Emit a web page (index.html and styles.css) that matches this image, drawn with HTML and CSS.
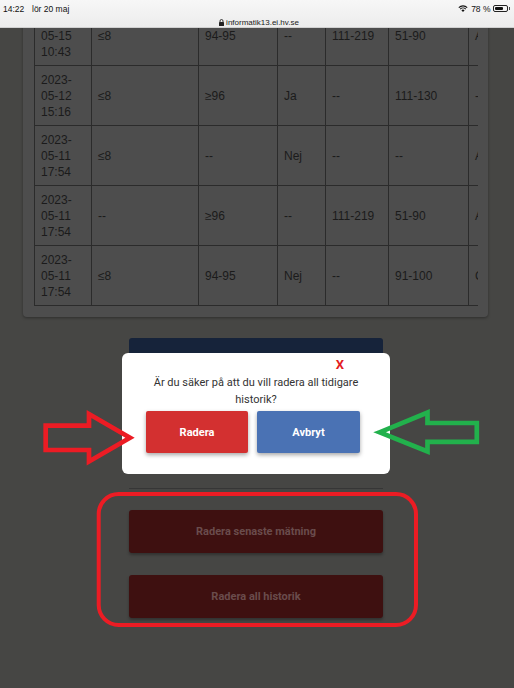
FILE: index.html
```html
<!DOCTYPE html>
<html lang="sv">
<head>
<meta charset="utf-8">
<title>Historik</title>
<link rel="stylesheet" href="styles.css">
</head>
<body>
<header class="statusbar">
  <div class="sb-row">
    <span class="sb-time">14:22</span>
    <span class="sb-date">lör 20 maj</span>
    <span class="sb-right">
      <svg class="sb-wifi" width="10" height="7" viewBox="0 0 10 7"><path d="M5 7 L3.4 5.3 A2.3 2.3 0 0 1 6.6 5.3 Z" fill="#111"/><path d="M2.2 4.1 A4 4 0 0 1 7.8 4.1" fill="none" stroke="#111" stroke-width="1.1"/><path d="M0.8 2.6 A6 6 0 0 1 9.2 2.6" fill="none" stroke="#111" stroke-width="1.1"/></svg>
      <span class="sb-pct">78 %</span>
      <span class="battery"><span class="battery-fill"></span></span><span class="battery-nub"></span>
    </span>
  </div>
  <div class="sb-url"><svg class="sb-lock" width="5" height="7" viewBox="0 0 5 7"><path d="M1 3 V2 A1.5 1.5 0 0 1 4 2 V3" fill="none" stroke="#222" stroke-width="0.9"/><rect x="0" y="3" width="5" height="4" rx="0.6" fill="#222"/></svg>informatik13.ei.hv.se</div>
</header>

<main class="page">
  <section class="card">
    <div class="table-wrap">
      <table class="history">
        <colgroup>
          <col class="c1"><col class="c2"><col class="c3"><col class="c4"><col class="c5"><col class="c6"><col class="c7">
        </colgroup>
        <tbody>
          <tr><td>2023-<br>05-15<br>10:43</td><td>≤8</td><td>94-95</td><td>--</td><td>111-219</td><td>51-90</td><td>Av</td></tr>
          <tr><td>2023-<br>05-12<br>15:16</td><td>≤8</td><td>≥96</td><td>Ja</td><td>--</td><td>111-130</td><td>-</td></tr>
          <tr><td>2023-<br>05-11<br>17:54</td><td>≤8</td><td>--</td><td>Nej</td><td>--</td><td>--</td><td>Av</td></tr>
          <tr><td>2023-<br>05-11<br>17:54</td><td>--</td><td>≥96</td><td>--</td><td>111-219</td><td>51-90</td><td>Av</td></tr>
          <tr><td>2023-<br>05-11<br>17:54</td><td>≤8</td><td>94-95</td><td>Nej</td><td>--</td><td>91-100</td><td>Ca</td></tr>
        </tbody>
      </table>
    </div>
  </section>

  <div class="actions">
    <button class="btn btn-navy" type="button"></button>
    <hr class="divider">
    <button class="btn btn-danger" type="button">Radera senaste mätning</button>
    <button class="btn btn-danger" type="button">Radera all historik</button>
  </div>
</main>

<div class="modal" role="dialog">
  <div class="modal-close"><span>X</span></div>
  <p class="modal-text">Är du säker på att du vill radera all tidigare<br>historik?</p>
  <div class="modal-actions">
    <button class="mbtn mbtn-red" type="button">Radera</button>
    <button class="mbtn mbtn-blue" type="button">Avbryt</button>
  </div>
</div>

<svg class="annotations" width="514" height="688" viewBox="0 0 514 688">
  <polygon points="45.7,425.7 89,425.7 89,414 130,437.7 89,461.5 89,450 45.7,450" fill="none" stroke="#ec1c24" stroke-width="4.7" stroke-linejoin="miter"/>
  <polygon points="379.5,432.3 427.5,412.5 427.5,423 476.8,423 476.8,441.8 427.5,441.8 427.5,451.5" fill="none" stroke="#22b14c" stroke-width="4.7" stroke-linejoin="miter"/>
  <rect x="98.7" y="494" width="317.3" height="131" rx="20" ry="20" fill="none" stroke="#ec1c24" stroke-width="4"/>
</svg>
</body>
</html>
```

FILE: styles.css
```css
html, body {
  margin: 0;
  padding: 0;
}
body {
  width: 514px;
  height: 688px;
  overflow: hidden;
  position: relative;
  background: #464644;
  font-family: "Liberation Sans", Arial, sans-serif;
}

/* status bar */
.statusbar {
  position: relative;
  z-index: 3;
  height: 28px;
  box-sizing: border-box;
  background: linear-gradient(#f7f7f7, #ececec);
  border-bottom: 1px solid #d0d0d0;
  color: #111;
}
.sb-row {
  display: flex;
  align-items: center;
  height: 17px;
  padding: 0 4px 0 3px;
  font-size: 8.5px;
}
.sb-time { width: 29px; }
.sb-date { }
.sb-right {
  margin-left: auto;
  display: flex;
  align-items: center;
  gap: 2px;
}
.sb-wifi { display: block; }
.sb-pct { margin-left: 1px; }
.battery {
  width: 14px;
  height: 6px;
  border: 1px solid #222;
  border-radius: 2px;
  padding: 1px;
  box-sizing: border-box;
  display: flex;
  width: 15px;
  height: 7px;
}
.battery-fill {
  width: 78%;
  background: #111;
  border-radius: 1px;
}
.battery-nub {
  width: 1.5px;
  height: 3px;
  background: #444;
  margin-left: -1px;
}
.sb-url {
  display: flex;
  justify-content: center;
  align-items: center;
  gap: 2px;
  font-size: 8px;
  color: #222;
  height: 10px;
  padding-left: 4px;
}
.sb-lock { display: block; }

/* page */
.page {
  margin-top: -34px;
}
.card {
  margin-left: 23px;
  width: 465px;
  box-sizing: border-box;
  padding: 11px 10px 11px 11px;
  background: #4d4d4d;
  border-radius: 4px;
  box-shadow: 0 1px 3px rgba(0, 0, 0, 0.35);
}
.table-wrap {
  width: 444px;
  overflow: hidden;
}
.history {
  border-collapse: collapse;
  table-layout: fixed;
  width: 494px;
  color: #1b1b1b;
  font-size: 12px;
  line-height: 16px;
}
.c1 { width: 57px; }
.c2 { width: 107px; }
.c3 { width: 79px; }
.c4 { width: 48px; }
.c5 { width: 63px; }
.c6 { width: 80px; }
.c7 { width: 60px; }
.history td {
  border: 1px solid #2b2b2b;
  padding: 5.5px 6px;
  vertical-align: middle;
  white-space: nowrap;
  overflow: hidden;
}

.actions {
  margin-left: 129px;
  width: 254px;
  display: flex;
  flex-direction: column;
}
.btn {
  border: none;
  height: 43px;
  border-radius: 3px;
  font-family: Roboto, "Liberation Sans", sans-serif;
  font-weight: 700;
  font-size: 11px;
}
.btn-navy {
  margin-top: 21px;
  background: #16233a;
}
.divider {
  margin: 107px 0 0;
  border: none;
  height: 1px;
  background: #363636;
}
.btn-danger {
  margin-top: 21px;
  background: #3e1010;
  color: #6a4c4c;
  box-shadow: 0 2px 3px rgba(0, 0, 0, 0.3);
}
.btn-danger + .btn-danger {
  margin-top: 22px;
}

/* modal */
.modal {
  position: absolute;
  left: 122px;
  top: 353px;
  width: 268px;
  height: 121px;
  box-sizing: border-box;
  padding-top: 5px;
  background: #fff;
  border-radius: 6px;
  font-family: Roboto, "Liberation Sans", sans-serif;
}
.modal-close {
  display: flex;
  justify-content: flex-end;
  padding-right: 46px;
  height: 14px;
  line-height: 14px;
  font-size: 13px;
  font-weight: 700;
  color: #e31b23;
}
.modal-text {
  margin: 2px 0 0;
  text-align: center;
  font-size: 11px;
  line-height: 17px;
  color: #333;
}
.modal-actions {
  display: flex;
  gap: 9px;
  margin-top: 3px;
  padding-left: 24px;
}
.mbtn {
  border: none;
  height: 42px;
  border-radius: 2px;
  color: #fff;
  font-family: Roboto, "Liberation Sans", sans-serif;
  font-weight: 700;
  font-size: 11px;
  box-shadow: 0 2px 4px rgba(0, 0, 0, 0.35);
}
.mbtn-red {
  width: 102px;
  background: #d33030;
}
.mbtn-blue {
  width: 103px;
  background: #4a72b4;
}

.annotations {
  position: absolute;
  left: 0;
  top: 0;
  pointer-events: none;
}
```
